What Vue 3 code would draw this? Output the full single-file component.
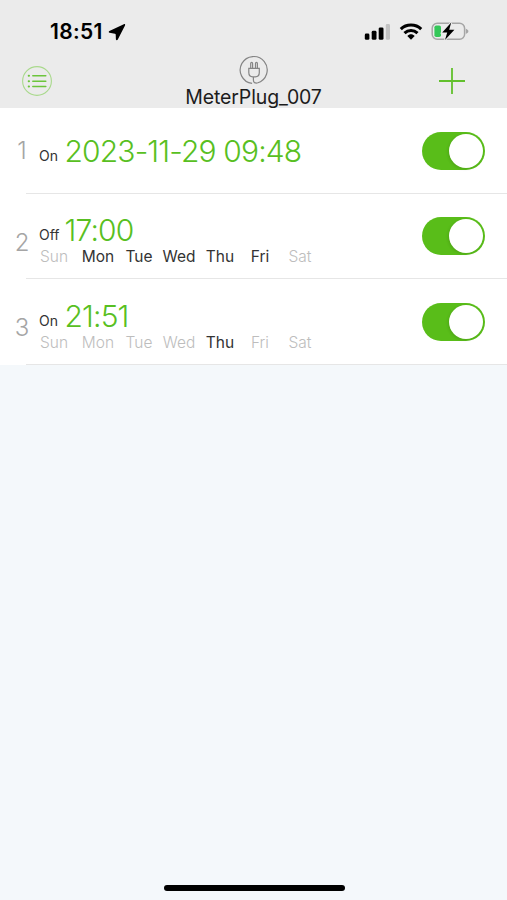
<template>
  <div class="screen">
    <header class="header">
      <div class="status">
        <span class="status__time">18:51</span>
        <svg class="status__location" width="18" height="18" viewBox="0 0 18 18">
          <path d="M15.8 1.2 1.4 7.9c-1 .5-.8 1.7.2 1.9l5.3.9c.5.1.8.4.8.9l.2 4.7c.1 1.1 1.3 1.3 1.9.3L17 2.4c.5-.9-.2-1.6-1.2-1.2z" />
        </svg>
        <div class="status__icons">
          <svg width="26" height="18" viewBox="0 0 26 18">
            <rect x=".8" y="10.5" width="4.6" height="6.3" rx="1.4" />
            <rect x="7.7" y="7.8" width="4.8" height="9" rx="1.4" />
            <rect x="14.7" y="4.4" width="4.8" height="12.4" rx="1.4" />
            <rect x="21.8" y="1" width="4.2" height="15.8" rx="1.4" fill="#c2c2c2" />
          </svg>
          <svg class="status__wifi" width="24" height="18" viewBox="0 0 24 18">
            <g fill="none" stroke="#000" stroke-width="3.1">
              <path d="M1.8 6.1C7.4.7 16.6.7 22.2 6.1" />
              <path d="M5.5 10.1c3.7-3.5 9.3-3.5 13 0" />
            </g>
            <path d="M8.3 12.9c2.2-2.1 5.2-2.1 7.4 0L12 16.8z" />
          </svg>
          <svg class="status__battery" width="38" height="20" viewBox="0 0 38 20">
            <rect x="1.2" y="1.2" width="32.4" height="16" rx="5" fill="none" stroke="#a6a6a6" stroke-width="1.5" />
            <path d="M34.8 6.7c1.8.7 2.6 1.5 2.6 2.6s-.8 1.9-2.6 2.6z" fill="#a6a6a6" />
            <rect x="3.4" y="3.4" width="6.6" height="11.6" rx="1.8" fill="#34c759" />
            <path d="M20.2.6 11.2 10.4h5l-2.2 7.5 9.4-10.2h-5.2z" stroke="#ebebeb" stroke-width="2" paint-order="stroke" />
          </svg>
        </div>
      </div>
      <div class="nav">
        <svg class="nav__menu" width="32" height="32" viewBox="0 0 32 32">
          <circle cx="16" cy="16" r="14.4" fill="none" stroke="#a9d98c" stroke-width="1.1" />
          <g fill="none" stroke="#6cc53c" stroke-width="1.5" stroke-linecap="round">
            <path d="M11.8 10.8h13M11.8 16.2h13M11.8 21.6h13" />
            <path d="M7.7 10.8h.3M7.7 16.2h.3M7.7 21.6h.3" stroke-width="2" />
          </g>
        </svg>
        <div class="nav__center">
          <svg width="30" height="30" viewBox="0 0 30 30" fill="none" stroke="#858585" stroke-width="1.2">
            <path d="M13.1 28.4A13.5 13.5 0 1 1 18.3 28" />
            <path d="M9.8 13.3h10.5v4.2c0 3-1.6 4.3-4 4.3h-2.5c-2.4 0-4-1.3-4-4.3z" />
            <path d="M11.7 13V8.4c0-1.5 1.9-1.5 1.9 0V13M16.5 13V8.4c0-1.5 1.9-1.5 1.9 0V13" />
            <path d="M14.4 22v3c0 2.3 1.2 3.2 3.9 3" />
          </svg>
          <div class="nav__title">MeterPlug_007</div>
        </div>
        <svg class="nav__add" width="28" height="28" viewBox="0 0 28 28">
          <path d="M14 1v26M1 14h26" fill="none" stroke="#62c02d" stroke-width="1.8" />
        </svg>
      </div>
    </header>

    <div class="list">
      <div v-for="(timer, i) in timers" :key="i" :class="{'row': true, 'weekly': timer.days}">
        <div class="row__index">{{ i + 1 }}</div>
        <div class="row__body">
          <div class="row__line">
            <span class="row__action">{{ timer.action }}</span>
            <span class="row__time">{{ timer.time }}</span>
          </div>
          <div v-if="timer.days" class="row__days">
            <span v-for="day in week" :key="day" :class="{'active': timer.days.includes(day)}">{{ day }}</span>
          </div>
        </div>
        <button :class="{'switch': true, 'on': timer.enabled}" @click="timer.enabled = !timer.enabled">
          <span class="switch__knob"></span>
        </button>
      </div>
    </div>

    <div class="home-indicator"></div>
  </div>
</template>

<script setup>
import {ref} from 'vue';

const week = ['Sun', 'Mon', 'Tue', 'Wed', 'Thu', 'Fri', 'Sat']

const timers = ref([
  {action: 'On', time: '2023-11-29 09:48', days: null, enabled: true},
  {action: 'Off', time: '17:00', days: ['Mon', 'Tue', 'Wed', 'Thu', 'Fri'], enabled: true},
  {action: 'On', time: '21:51', days: ['Thu'], enabled: true},
])
</script>

<style>
body {
  margin: 0;
}
</style>

<style scoped>
.screen {
  display: flex;
  flex-direction: column;
  box-sizing: border-box;
  width: 507px;
  height: 900px;
  overflow: hidden;
  background: #f4f8fb;
  font-family: Inter, "Liberation Sans", sans-serif;
  color: #1c1c1c;
}

.header {
  height: 108.4px;
  background: #ebebeb;
}

.status {
  display: flex;
  align-items: center;
  box-sizing: border-box;
  height: 54px;
  padding: 9px 38px 0 50px;
}

.status__time {
  width: 54px;
  font-weight: 600;
  font-size: 21px;
  letter-spacing: 0.3px;
  color: #000;
}

.status__location {
  margin-left: 4px;
}

.status__icons {
  display: flex;
  align-items: center;
  margin-left: auto;
}

.status__wifi {
  margin-left: 9px;
}

.status__battery {
  margin-left: 8px;
}

.nav {
  display: flex;
  justify-content: space-between;
  height: 54px;
  padding: 0 41px 0 21px;
}

.nav__menu {
  margin-top: 11px;
}

.nav__center {
  display: flex;
  flex-direction: column;
  align-items: center;
  margin-left: 16px;
}

.nav__center svg {
  margin-top: 1px;
}

.nav__title {
  height: 22px;
  font-size: 19.5px;
  line-height: 24px;
  letter-spacing: -0.12px;
  white-space: nowrap;
}

.nav__add {
  margin-top: 13px;
}

.list {
  background: #fff;
}

.row {
  display: flex;
  align-items: center;
  height: 85.4px;
  padding-right: 22px;
  background: linear-gradient(#e6e6e6, #e6e6e6) 26px 100% / 100% 1px no-repeat;
}

.row__index {
  display: flex;
  justify-content: center;
  width: 12px;
  margin-left: 16px;
  font-weight: 350;
  font-size: 24px;
  line-height: 30px;
  color: #a5a5a5;
}

.row__body {
  flex: 1;
}

.row__line {
  display: flex;
  height: 36px;
  padding-left: 11px;
  line-height: 36px;
}

.row__action {
  width: 25.5px;
  font-size: 14px;
  line-height: 45px;
  color: #333;
}

.row__time {
  font-weight: 300;
  font-size: 30px;
  letter-spacing: -0.85px;
  white-space: nowrap;
  color: #58bf22;
}

.row__days {
  display: grid;
  grid-template-columns: 44px 44px 38px 42px 40px 40px 40px;
  height: 20px;
  margin: -1px 0 0 4px;
  font-weight: 350;
  font-size: 15.5px;
  line-height: 20px;
  text-align: center;
  color: #bdbdbd;
}

.row__days .active {
  font-weight: 400;
  color: #333;
}

.row.weekly .row__index {
  padding-top: 13px;
}

.row.weekly .row__body {
  padding-top: 6.8px;
}

.switch {
  display: flex;
  align-items: center;
  width: 63px;
  height: 38px;
  padding: 0 2px;
  border: 0;
  border-radius: 19px;
  background: #d9d9d9;
}

.switch.on {
  justify-content: flex-end;
  background: #59bd19;
}

.switch__knob {
  width: 34px;
  height: 34px;
  border-radius: 50%;
  background: #fff;
  box-shadow: -1px 1px 3px rgba(0, 0, 0, 0.12);
}

.home-indicator {
  width: 181px;
  height: 6px;
  margin: auto auto 9.5px 163.5px;
  border-radius: 3px;
  background: #000;
}
</style>
